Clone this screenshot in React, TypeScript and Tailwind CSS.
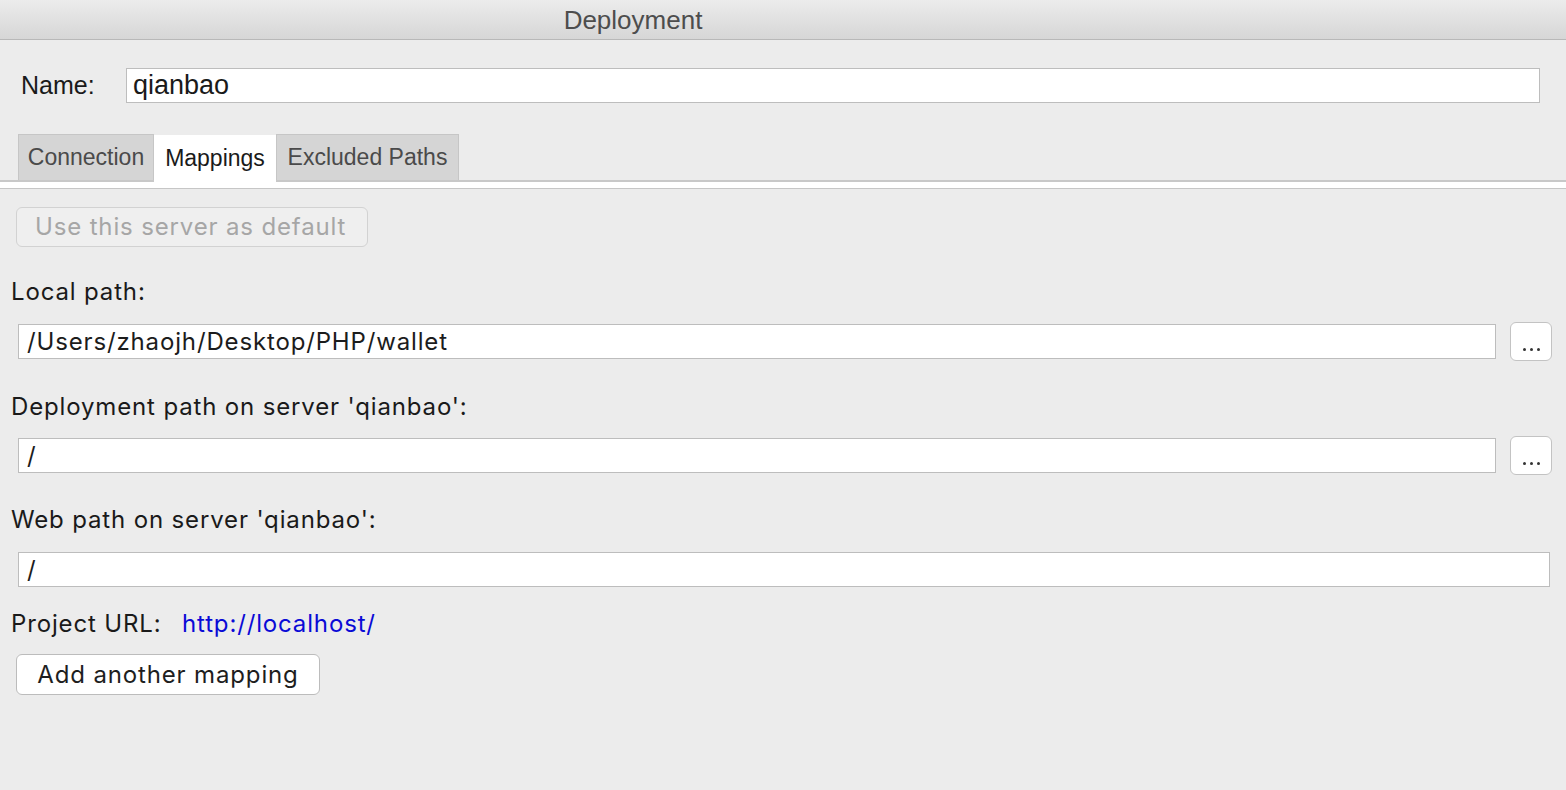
import React from "react";

const body = { fontFamily: "Inter, 'Liberation Sans', sans-serif", letterSpacing: "0.85px" } as React.CSSProperties;
const helv = { fontFamily: "'Liberation Sans', Arial, sans-serif" } as React.CSSProperties;

function Field({ value, right }: { value: string; right?: boolean }) {
  return (
    <div className="flex items-center">
      <div className="ml-[18px] h-[35px] flex-1 border border-[#bdbdbd] bg-white pl-[8px] flex items-center text-[24px] leading-none text-[#1c1c1c]" style={body}>
        {value}
      </div>
      {right ? (
        <div className="ml-[14px] mr-[14px] h-[39px] w-[42px] rounded-[6px] border border-[#c3c3c3] bg-white flex items-end justify-center pb-[9px]">
          <span className="flex gap-[4px]">
            <span className="block h-[3px] w-[3px] rounded-full bg-[#333]" />
            <span className="block h-[3px] w-[3px] rounded-full bg-[#333]" />
            <span className="block h-[3px] w-[3px] rounded-full bg-[#333]" />
          </span>
        </div>
      ) : (
        <div className="w-[16px]" />
      )}
    </div>
  );
}

export default function App() {
  return (
    <div className="w-[1566px] h-[790px] bg-[#ececec] overflow-hidden flex flex-col">
      <div className="h-[40px] border-b border-[#b8b8b8] bg-gradient-to-b from-[#ececec] to-[#d6d6d6] flex items-center justify-center pr-[300px] text-[26px] leading-none text-[#4d4d4d]" style={helv}>
        Deployment
      </div>
      <div className="mt-[28px] h-[35px] flex items-center">
        <span className="ml-[21px] w-[105px] text-[25px] leading-none text-[#1a1a1a]" style={helv}>Name:</span>
        <div className="h-[35px] w-[1414px] border border-[#bdbdbd] bg-white flex items-center pl-[6px] text-[27px] leading-none text-[#1a1a1a]" style={helv}>
          qianbao
        </div>
      </div>
      <div className="mt-[31px] h-[46px] flex items-end pl-[18px] relative z-10">
        <div className="h-[46px] w-[136px] bg-[#d5d5d5] border border-[#c6c6c6] border-b-0 flex items-center justify-center text-[23px] leading-none text-[#4a4a4a]" style={helv}>
          Connection
        </div>
        <div className="h-[47px] w-[122px] bg-white flex items-center justify-center text-[23px] leading-none text-[#1a1a1a] -mb-[2px]" style={helv}>
          Mappings
        </div>
        <div className="h-[46px] w-[183px] bg-[#d5d5d5] border border-[#c6c6c6] border-b-0 flex items-center justify-center text-[23px] leading-none text-[#4a4a4a]" style={helv}>
          Excluded Paths
        </div>
      </div>
      <div className="h-[9px] border-t-2 border-b border-t-[#c8c8c8] border-b-[#c6c6c6] bg-white" />
      <div className="mt-[18px] ml-[16px] h-[40px] w-[352px] rounded-[6px] border border-[#d2d2d2] bg-[#efefef] flex items-center pl-[18px] text-[24px] leading-none text-[#a6a6a6]" style={body}>
        Use this server as default
      </div>
      <div className="mt-[31px] ml-[11px] h-[28px] flex items-center text-[24px] leading-none text-[#1a1a1a]" style={body}>Local path:</div>
      <div className="mt-[16px]">
        <Field value="/Users/zhaojh/Desktop/PHP/wallet" right />
      </div>
      <div className="mt-[32px] ml-[11px] h-[28px] flex items-center text-[24px] leading-none text-[#1a1a1a]" style={body}>Deployment path on server 'qianbao':</div>
      <div className="mt-[15px]">
        <Field value="/" right />
      </div>
      <div className="mt-[31px] ml-[11px] h-[28px] flex items-center text-[24px] leading-none text-[#1a1a1a]" style={body}>Web path on server 'qianbao':</div>
      <div className="mt-[18px]">
        <Field value="/" />
      </div>
      <div className="mt-[23px] ml-[11px] h-[28px] flex items-center text-[24px] leading-none" style={body}>
        <span className="text-[#1a1a1a] w-[171px]">Project URL:</span>
        <span className="text-[#0a0ad6]">http://localhost/</span>
      </div>
      <div className="mt-[16px] ml-[16px] h-[41px] w-[304px] rounded-[6px] border border-[#bcbcbc] bg-white flex items-center justify-center text-[24px] leading-none text-[#1e1e1e]" style={body}>
        Add another mapping
      </div>
    </div>
  );
}
